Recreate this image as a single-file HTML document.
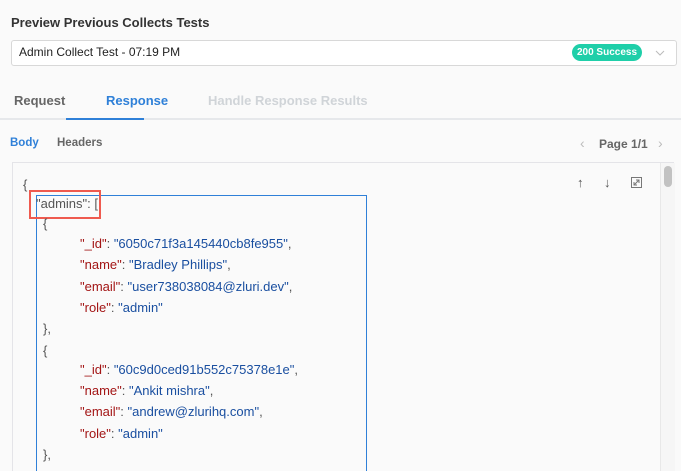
<!DOCTYPE html>
<html style="overflow:hidden;height:471px"><head><style>
body{margin:0;width:681px;height:471px;background:#fafafa;font-family:"Liberation Sans",sans-serif;position:relative;overflow:hidden}
.a{position:absolute;white-space:nowrap}
.k{color:#a31515}.v{color:#1a4fa0}.p{color:#555}
.code div{position:absolute;font-size:13px;white-space:nowrap;color:#555}
</style></head><body>
<div class="a" style="left:11px;top:15px;font-size:13px;font-weight:bold;color:#333">Preview Previous Collects Tests</div>
<div class="a" style="left:11px;top:40px;width:664px;height:24px;border:1px solid #d8d8d8;border-radius:3px;background:#fff"></div>
<div class="a" style="left:19px;top:45px;font-size:12px;color:#222">Admin Collect Test - 07:19 PM</div>
<div class="a" style="left:572px;top:44px;width:70px;height:17px;border-radius:9px;background:#1fcfa9;color:#fff;font-size:10px;font-weight:bold;text-align:center;line-height:17px">200 Success</div>
<svg class="a" style="left:654px;top:49px" width="12" height="8"><path d="M2 2l4 4 4-4" stroke="#bbb" fill="none"/></svg>
<div class="a" style="left:14px;top:93px;font-size:13px;font-weight:bold;color:#666">Request</div>
<div class="a" style="left:106px;top:93px;font-size:13px;font-weight:bold;color:#2f80d8">Response</div>
<div class="a" style="left:208px;top:93px;font-size:13px;font-weight:bold;color:#d0d4d8">Handle Response Results</div>
<div class="a" style="left:0;top:118px;width:681px;height:2px;background:#e6e8eb"></div>
<div class="a" style="left:66px;top:118px;width:78px;height:2px;background:#2f80d8"></div>
<div class="a" style="left:10px;top:137px;font-size:11.5px;font-weight:bold;color:#2f80d8">Body</div>
<div class="a" style="left:57px;top:137px;font-size:11.5px;font-weight:bold;color:#666">Headers</div>
<div class="a" style="left:580px;top:135px;font-size:14px;color:#bbb">‹</div>
<div class="a" style="left:599px;top:137px;font-size:12px;font-weight:bold;color:#666">Page 1/1</div>
<div class="a" style="left:658px;top:135px;font-size:14px;color:#bbb">›</div>
<div class="a" style="left:12px;top:162px;width:662px;height:309px;border:1px solid #e4e4e8;border-bottom:none;background:#fafafa;box-sizing:border-box"></div>
<div class="a" style="left:660px;top:163px;width:14px;height:308px;background:#f6f6f6;border-left:1px solid #e8e8e8"></div>
<div class="a" style="left:664px;top:166px;width:8px;height:21px;border-radius:4px;background:#c2c2c2"></div>
<div class="a" style="left:577px;top:175px;font-size:13px;font-weight:bold;color:#555">↑</div>
<div class="a" style="left:604px;top:175px;font-size:13px;font-weight:bold;color:#555">↓</div>
<svg class="a" style="left:631px;top:177px" width="12" height="12"><rect x="0.5" y="0.5" width="10" height="10" fill="none" stroke="#777"/><path d="M3 8l5-5M5 3h3v3M3 5v3h3" stroke="#777" fill="none"/></svg>
<div class="a" style="left:36px;top:195px;width:329px;height:290px;border:1px solid #2f80d8"></div>
<div class="a" style="left:29px;top:190px;width:68px;height:25px;border:2px solid #ef5a4f"></div>
<div class="code">
<div style="left:23px;top:177px">{</div>
<div style="left:36px;top:196px">"admins": [</div>
<div style="left:43px;top:216px">{</div>
<div style="left:80px;top:236px"><span class="k">"_id"</span>: <span class="v">"6050c71f3a145440cb8fe955"</span>,</div>
<div style="left:80px;top:257px"><span class="k">"name"</span>: <span class="v">"Bradley Phillips"</span>,</div>
<div style="left:80px;top:279px"><span class="k">"email"</span>: <span class="v">"user738038084@zluri.dev"</span>,</div>
<div style="left:80px;top:300px"><span class="k">"role"</span>: <span class="v">"admin"</span></div>
<div style="left:43px;top:321px">},</div>
<div style="left:43px;top:343px">{</div>
<div style="left:80px;top:362px"><span class="k">"_id"</span>: <span class="v">"60c9d0ced91b552c75378e1e"</span>,</div>
<div style="left:80px;top:383px"><span class="k">"name"</span>: <span class="v">"Ankit mishra"</span>,</div>
<div style="left:80px;top:404px"><span class="k">"email"</span>: <span class="v">"andrew@zlurihq.com"</span>,</div>
<div style="left:80px;top:426px"><span class="k">"role"</span>: <span class="v">"admin"</span></div>
<div style="left:43px;top:447px">},</div>
</div>
</body></html>
